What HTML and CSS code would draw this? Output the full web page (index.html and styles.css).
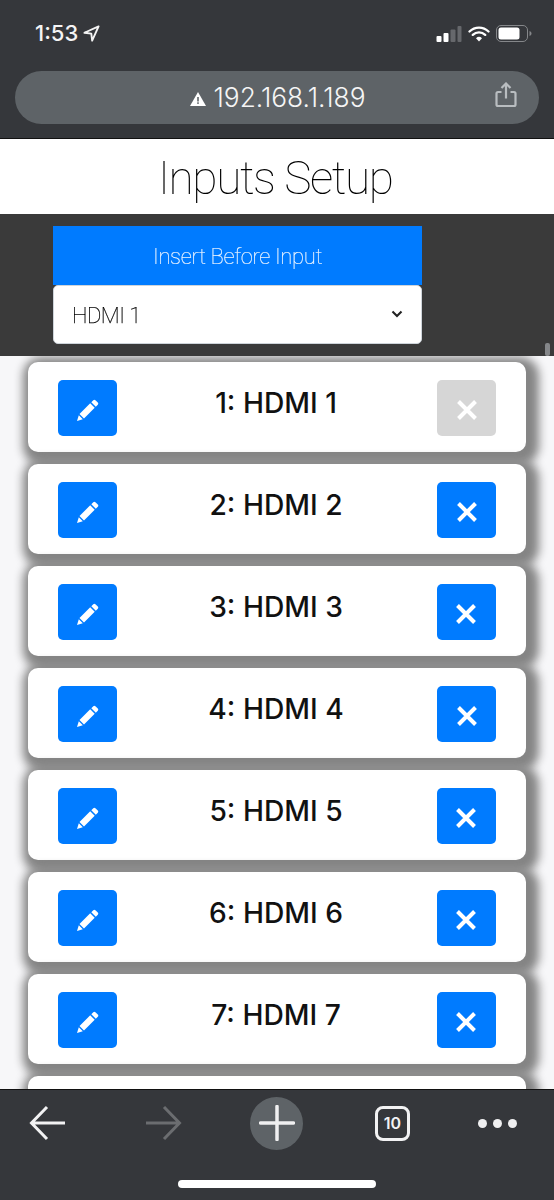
FILE: index.html
```html
<!DOCTYPE html>
<html lang="en">
<head>
<meta charset="utf-8">
<title>Inputs Setup</title>
<link rel="stylesheet" href="styles.css">
</head>
<body>
<div class="phone">
  <header class="chrome">
    <div class="status">
      <div class="status-left">
        <span class="time">1:53</span>
        <svg class="loc" viewBox="0 0 18 18"><path d="M16.5 1.5 1.5 8.2l7.3.9.9 7.4z" fill="none" stroke="#f4f4f4" stroke-width="2" stroke-linejoin="round"/></svg>
      </div>
      <div class="status-right">
        <svg class="signal" viewBox="0 0 25 16"><rect x="0" y="10" width="5" height="6" rx="1" fill="#fff"/><rect x="7" y="7" width="5" height="9" rx="1" fill="#fff"/><rect x="14" y="3.500" width="5" height="12.500" rx="1" fill="#66686c"/><rect x="21" y="0" width="4" height="16" rx="1" fill="#66686c"/></svg>
        <svg class="wifi" viewBox="0 0 22 16"><path d="M1.500 5.500a13.500 13.500 0 0 1 19 0M4.800 8.900a9 9 0 0 1 12.400 0" fill="none" stroke="#fff" stroke-width="2.300" stroke-linecap="round"/><path d="M8 12.200a4.300 4.300 0 0 1 6 0L11 15.500z" fill="#fff"/></svg>
        <svg class="battery" viewBox="0 0 36 17"><rect x=".5" y=".5" width="31" height="16" rx="4.500" fill="none" stroke="#85878a"/><rect x="2.500" y="2.500" width="21" height="12" rx="2.500" fill="#fff"/><path d="M33.500 6v5c1.300-.4 2-1.400 2-2.500s-.7-2.100-2-2.500z" fill="#85878a"/></svg>
      </div>
    </div>
    <div class="urlbar">
      <div class="url">
        <svg class="warn" viewBox="0 0 16 14"><path d="M8 0 16 14H0z" fill="#fff"/><rect x="7.200" y="5" width="1.600" height="4.500" fill="#5f6468"/><rect x="7.200" y="10.300" width="1.600" height="1.600" fill="#5f6468"/></svg>
        <span>192.168.1.189</span>
      </div>
      <svg class="share" viewBox="0 0 22 26"><path d="M6.500 10H3a1.500 1.500 0 0 0-1.500 1.500v11A1.500 1.500 0 0 0 3 24h16a1.500 1.500 0 0 0 1.500-1.500v-11A1.500 1.500 0 0 0 19 10h-3.500M11 16.500V2M6.500 6 11 1.500 15.500 6" fill="none" stroke="#b9bdc0" stroke-width="2.200"/></svg>
    </div>
  </header>

  <main class="page">
    <h1 class="title"><span class="gray">Inputs Setup</span></h1>
    <section class="insert">
      <div class="insert-form">
        <div class="insert-label"><span class="gray">Insert Before Input</span></div>
        <div class="select">
          <span class="gray">HDMI 1</span>
          <svg class="chev" viewBox="0 0 12 8"><path d="M1.500 1.500 6 6l4.500-4.500" fill="none" stroke="#222" stroke-width="2.100"/></svg>
        </div>
      </div>
    </section>
    <div class="scroll-thumb"></div>
    <section class="list">
      <div class="card">
        <button class="btn"><svg class="pencil" viewBox="0 0 24 24"><use href="#pencil"/></svg></button>
        <span class="name">1: HDMI 1</span>
        <button class="btn off"><svg class="x" viewBox="0 0 22 22"><use href="#cross"/></svg></button>
      </div>
      <div class="card">
        <button class="btn"><svg class="pencil" viewBox="0 0 24 24"><use href="#pencil"/></svg></button>
        <span class="name">2: HDMI 2</span>
        <button class="btn"><svg class="x" viewBox="0 0 22 22"><use href="#cross"/></svg></button>
      </div>
      <div class="card">
        <button class="btn"><svg class="pencil" viewBox="0 0 24 24"><use href="#pencil"/></svg></button>
        <span class="name">3: HDMI 3</span>
        <button class="btn"><svg class="x" viewBox="0 0 22 22"><use href="#cross"/></svg></button>
      </div>
      <div class="card">
        <button class="btn"><svg class="pencil" viewBox="0 0 24 24"><use href="#pencil"/></svg></button>
        <span class="name">4: HDMI 4</span>
        <button class="btn"><svg class="x" viewBox="0 0 22 22"><use href="#cross"/></svg></button>
      </div>
      <div class="card">
        <button class="btn"><svg class="pencil" viewBox="0 0 24 24"><use href="#pencil"/></svg></button>
        <span class="name">5: HDMI 5</span>
        <button class="btn"><svg class="x" viewBox="0 0 22 22"><use href="#cross"/></svg></button>
      </div>
      <div class="card">
        <button class="btn"><svg class="pencil" viewBox="0 0 24 24"><use href="#pencil"/></svg></button>
        <span class="name">6: HDMI 6</span>
        <button class="btn"><svg class="x" viewBox="0 0 22 22"><use href="#cross"/></svg></button>
      </div>
      <div class="card">
        <button class="btn"><svg class="pencil" viewBox="0 0 24 24"><use href="#pencil"/></svg></button>
        <span class="name">7: HDMI 7</span>
        <button class="btn"><svg class="x" viewBox="0 0 22 22"><use href="#cross"/></svg></button>
      </div>
      <div class="card"></div>
    </section>
  </main>

  <footer class="toolbar">
    <div class="tools">
      <svg class="tool" viewBox="0 0 38 36"><path d="M36 18H3M18 2 2.500 18 18 34" fill="none" stroke="#f2f2f3" stroke-width="3"/></svg>
      <svg class="tool" viewBox="0 0 38 36"><path d="M2 18h33M20 2l15.500 16L20 34" fill="none" stroke="#6b6d70" stroke-width="3"/></svg>
      <div class="plus"><svg viewBox="0 0 36 36"><path d="M18 1.500v33M1.500 18h33" stroke="#f0f0f1" stroke-width="3.500" stroke-linecap="round"/></svg></div>
      <div class="tabs">10</div>
      <div class="more"><i></i><i></i><i></i></div>
    </div>
    <div class="home"></div>
  </footer>
</div>

<svg class="defs" width="0" height="0">
  <symbol id="pencil" viewBox="0 0 24 24">
    <path fill="#fff" d="M17.300 2.200a1.500 1.500 0 0 1 2.100 0l2.400 2.400a1.500 1.500 0 0 1 0 2.100l-2 2-4.500-4.500zM14.200 5.300l4.500 4.500L8 20.500l-4.500-4.500z"/>
    <path fill="#fff" d="M2.800 17.200l4 4L1 23z"/>
  </symbol>
  <symbol id="cross" viewBox="0 0 22 22">
    <path d="M2.500 2.500l17 17M19.500 2.500l-17 17" fill="none" stroke="#fff" stroke-width="4"/>
  </symbol>
</svg>
</body>
</html>
```

FILE: styles.css
```css
* { box-sizing: border-box; }
html, body { margin: 0; padding: 0; height: 100%; overflow: hidden; }
body { font-family: "Inter", "Liberation Sans", sans-serif; background: #f7f7f9; }
.defs { position: absolute; }
.gray { display: inline-block; will-change: transform; }

.phone { width: 554px; height: 1200px; display: flex; flex-direction: column; overflow: hidden; position: relative; }

/* Browser chrome */
.chrome { height: 139px; flex: none; background: #35373b; padding: 0 15px; border-bottom: 1px solid #111; }
.status { height: 71px; display: flex; justify-content: space-between; align-items: flex-start; padding: 22px 0 0 20px; }
.status-left { display: flex; align-items: center; gap: 5px; }
.time { font-size: 22px; line-height: 22px; font-weight: 500; color: #f4f4f4; }
.loc { width: 17px; height: 17px; }
.status-right { display: flex; align-items: center; gap: 6px; padding: 3px 0 0; margin-right: 7px; }
.signal { width: 26px; height: 16px; }
.wifi { width: 22px; height: 16px; }
.battery { width: 36px; height: 17px; }
.urlbar { height: 53px; border-radius: 27px; background: #5e6367; position: relative; display: flex; align-items: center; justify-content: center; }
.url { display: flex; align-items: center; gap: 7px; color: #f5f5f5; font-size: 26.3px; font-weight: 300; margin-left: 2px; }
.warn { width: 16px; height: 14px; margin-top: 3px; }
.share { position: absolute; right: 22px; top: 11px; width: 22px; height: 26px; }

/* Page */
.page { flex: 1; min-height: 0; overflow: hidden; position: relative; display: flex; flex-direction: column; }
.title { margin: 0; height: 75px; flex: none; background: #fff; padding-right: 3px; text-align: center; font-weight: 100; font-size: 46px; letter-spacing: -1.4px; line-height: 78px; color: #000; font-family: "Roboto", "Inter", sans-serif; }
.insert { height: 142px; flex: none; background: #3a3a3a; padding: 12px 0 0 53px; position: relative; z-index: 1; }
.insert-form { width: 369px; }
.insert-label { height: 59px; background: #007bff; color: #eef5ff; text-align: center; font-family: "Roboto", sans-serif; font-weight: 100; font-size: 22px; letter-spacing: -0.35px; line-height: 61px; -webkit-text-stroke: 0.2px #eef5ff; }
.select { height: 59px; background: #fff; border: 1px solid #ced4da; border-radius: 5px; display: flex; align-items: center; justify-content: space-between; padding: 2px 18px 0; color: #000; font-family: "Roboto", sans-serif; font-weight: 100; font-size: 22px; letter-spacing: -0.5px; -webkit-text-stroke: 0.25px #000; }
.chev { width: 12px; height: 8px; margin-top: -4px; }
.scroll-thumb { position: absolute; left: 545px; top: 204px; width: 5px; height: 13px; border-radius: 2px; background: #85878a; z-index: 2; }

.list { padding: 6px 28px 0; display: flex; flex-direction: column; gap: 12px; }
.card { height: 90px; flex: none; background: #fff; border-radius: 10px; padding: 18px 30px 16px; display: flex; align-items: flex-start; justify-content: space-between; box-shadow: 4px 4px 10px 9px #858585; }
.btn { width: 59px; height: 56px; flex: none; padding: 0; border: 0; border-radius: 5px; background: #007bff; display: flex; align-items: center; justify-content: center; }
.btn.off { background: #d6d6d6; }
.pencil { width: 24px; height: 24px; margin-top: 4px; }
.x { width: 22px; height: 22px; margin-top: 4px; }
.name { font-size: 28.2px; line-height: 46px; color: #111; font-weight: 450; margin-right: 2px; }

/* Bottom toolbar */
.toolbar { height: 111px; flex: none; background: #35373b; border-top: 1px solid #111; position: relative; z-index: 1; }
.tools { height: 66px; display: grid; grid-template-columns: 115px 106px 125px 103px auto; align-items: center; justify-items: start; padding-left: 29px; }
.tool { width: 38px; height: 36px; }
.plus { width: 53px; height: 53px; border-radius: 50%; background: #5e6367; display: flex; align-items: center; justify-content: center; }
.plus svg { width: 36px; height: 36px; }
.tabs { width: 35px; height: 35px; border: 3px solid #f2f2f3; border-radius: 8px; color: #f2f2f3; font-size: 16px; font-weight: 600; display: flex; align-items: center; justify-content: center; }
.more { display: flex; gap: 6px; }
.more i { width: 9px; height: 9px; border-radius: 50%; background: #f0f0f1; }
.home { width: 198px; height: 8px; margin: 24px auto 0; border-radius: 4px; background: #fff; }
```
